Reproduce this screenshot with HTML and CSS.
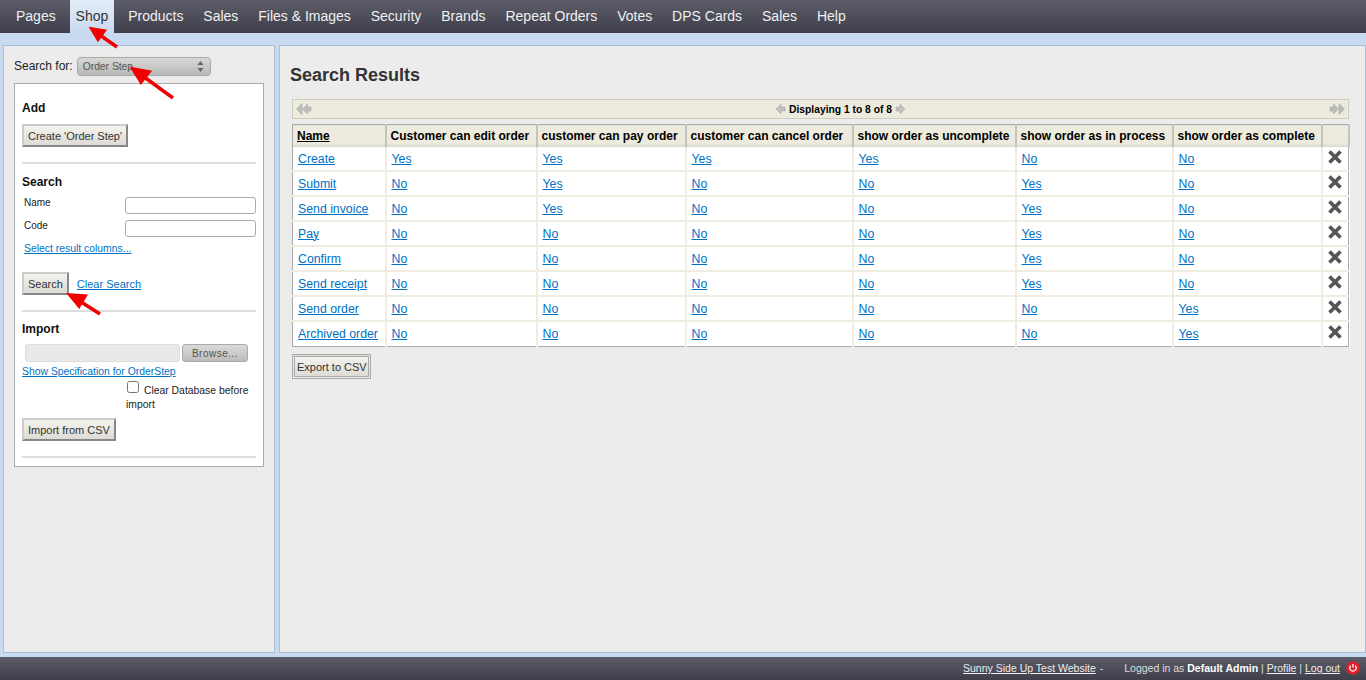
FILE: index.html
```html
<!DOCTYPE html>
<html lang="en">
<head>
  <meta charset="UTF-8">
  <title>Order Steps</title>
  <link rel="stylesheet" href="styles.css">
</head>
<body>

<nav class="topnav">
  <a href="#">Pages</a>
  <a href="#" class="current">Shop</a>
  <a href="#">Products</a>
  <a href="#">Sales</a>
  <a href="#">Files &amp; Images</a>
  <a href="#">Security</a>
  <a href="#">Brands</a>
  <a href="#">Repeat Orders</a>
  <a href="#">Votes</a>
  <a href="#">DPS Cards</a>
  <a href="#">Sales</a>
  <a href="#">Help</a>
</nav>

<div class="main">
  <aside class="side">
    <div class="search-for">
      <label>Search for:</label>
      <div class="fake-select">
        <span>Order Step</span>
        <svg width="7" height="13" viewBox="0 0 7 13"><path d="M3.5 1 6.5 5H.5zM3.5 12 .5 8h6z" fill="#666"/></svg>
      </div>
    </div>
    <div class="side-box">
      <h4>Add</h4>
      <button class="btn">Create 'Order Step'</button>
      <hr>
      <h4 class="search-title">Search</h4>
      <div class="field"><label>Name</label><input type="text"></div>
      <div class="field"><label>Code</label><input type="text"></div>
      <a href="#" class="small-link columns-link">Select result columns...</a>
      <div class="search-actions">
        <button class="btn">Search</button>
        <a href="#" class="clear-link">Clear Search</a>
      </div>
      <hr>
      <h4>Import</h4>
      <div class="file-row">
        <div class="file-name"></div>
        <div class="browse">Browse...</div>
      </div>
      <a href="#" class="small-link spec-link">Show Specification for OrderStep</a>
      <div class="clear-db">
        <input type="checkbox">
        <span>Clear Database before import</span>
      </div>
      <button class="btn">Import from CSV</button>
      <hr>
    </div>
  </aside>

  <section class="content">
    <h2>Search Results</h2>

    <div class="pager">
      <svg class="arrow" width="16" height="12" viewBox="0 0 16 12"><path d="M6 .5.5 6 6 11.5zM11.5 1 6.5 6l5 5V8H15V4h-3.500z" fill="#bcbcbc" stroke="#a0a0a0" stroke-width=".5"/></svg>
      <div class="pager-mid">
        <svg class="arrow" width="11" height="12" viewBox="0 0 11 12"><path d="M6 1 1 6l5 5V8h4V4H6z" fill="#c0c0c0" stroke="#a0a0a0" stroke-width=".5"/></svg>
        <b>Displaying 1 to 8 of 8</b>
        <svg class="arrow" width="11" height="12" viewBox="0 0 11 12"><path d="M5 1l5 5-5 5V8H1V4h4z" fill="#c0c0c0" stroke="#a0a0a0" stroke-width=".5"/></svg>
      </div>
      <svg class="arrow" width="16" height="12" viewBox="0 0 16 12"><path d="M10 .5 15.500 6 10 11.500zM4.500 1l5 5-5 5V8H1V4h3.500z" fill="#bcbcbc" stroke="#a0a0a0" stroke-width=".5"/></svg>
    </div>

    <table class="results">
      <colgroup>
        <col class="c1"><col class="c2"><col class="c3"><col class="c4"><col class="c5"><col class="c6"><col class="c7"><col class="c8">
      </colgroup>
      <thead>
        <tr>
          <th><a href="#">Name</a></th>
          <th>Customer can edit order</th>
          <th>customer can pay order</th>
          <th>customer can cancel order</th>
          <th>show order as uncomplete</th>
          <th>show order as in process</th>
          <th>show order as complete</th>
          <th></th>
        </tr>
      </thead>
      <tbody id="rows"></tbody>
    </table>

    <button class="btn export">Export to CSV</button>
  </section>
</div>

<footer class="bottom">
  <a href="#" class="site-link">Sunny Side Up Test Website</a>
  <span class="dash">-</span>
  <span class="login">Logged in as <b>Default Admin</b> | <a href="#">Profile</a> | <a href="#">Log out</a></span>
  <svg class="power" width="14" height="14" viewBox="0 0 14 14"><circle cx="7" cy="7" r="6.8" fill="#e0202a"/><path d="M4.800 4.600a3.200 3.200 0 1 0 4.400 0" fill="none" stroke="#fff" stroke-width="1.300"/><path d="M7 3v3.600" stroke="#fff" stroke-width="1.300"/></svg>
</footer>

<!-- red annotation arrows from the screenshot -->
<svg class="annotations" width="1366" height="680" viewBox="0 0 1366 680">
  <g stroke="#f00000" stroke-width="3.500" fill="#f00000">
    <path d="M117 47 97 33"/><path d="M92 29 104 31 98 39z"/>
    <path d="M173 98 140 74"/><path d="M133 69 149 72 141 82z"/>
    <path d="M100 314 78 300"/><path d="M70 295 85 296 79 306z"/>
  </g>
</svg>

<script>
  const rows = [
    ["Create", "Yes", "Yes", "Yes", "Yes", "No", "No"],
    ["Submit", "No", "Yes", "No", "No", "Yes", "No"],
    ["Send invoice", "No", "Yes", "No", "No", "Yes", "No"],
    ["Pay", "No", "No", "No", "No", "Yes", "No"],
    ["Confirm", "No", "No", "No", "No", "Yes", "No"],
    ["Send receipt", "No", "No", "No", "No", "Yes", "No"],
    ["Send order", "No", "No", "No", "No", "No", "Yes"],
    ["Archived order", "No", "No", "No", "No", "No", "Yes"]
  ];
  const deleteIcon = '<svg width="16" height="16" viewBox="0 0 16 16"><path d="M2.500 2.500l11 11M13.500 2.500l-11 11" stroke="#555" stroke-width="3.600"/></svg>';

  document.getElementById('rows').innerHTML = rows.map(row => `
    <tr>
      ${row.map(text => `<td><a href="#">${text}</a></td>`).join('')}
      <td class="del">${deleteIcon}</td>
    </tr>
  `).join('');
</script>

</body>
</html>
```

FILE: styles.css
```css
html, body {
  height: 100%;
}
body {
  margin: 0;
  height: 680px;
  overflow: hidden;
  display: flex;
  flex-direction: column;
  background-color: #c8daf0;
  font-family: "Liberation Sans", Arial, sans-serif;
  font-size: 12px;
  color: #222;
}
a {
  color: #0071c4;
}

/* top menu */
.topnav {
  height: 33px;
  flex: none;
  display: flex;
  gap: 7.9px;
  padding-left: 10px;
  background: linear-gradient(#5c5d68, #3e3f4a);
}
.topnav a {
  padding: 8px 6px 0;
  color: #f0f0f0;
  font-size: 14px;
  text-decoration: none;
}
.topnav a.current {
  background: linear-gradient(#e4edf8, #c8daf0);
  color: #333;
}

.main {
  flex: 1;
  min-height: 0;
  display: flex;
  gap: 4px;
  padding: 12px 2px 4px 3px;
}

/* left column */
.side {
  width: 272px;
  flex: none;
  box-sizing: border-box;
  padding: 11px 10px 0 10px;
  background-color: #ececec;
  border: 1px solid #a9bdd6;
}
.search-for {
  display: flex;
  align-items: center;
  gap: 4px;
  font-size: 12px;
  color: #222;
}
.search-for label {
  padding-bottom: 1px;
}
.fake-select {
  width: 134px;
  height: 19px;
  box-sizing: border-box;
  display: flex;
  align-items: center;
  justify-content: space-between;
  padding: 0 6px 0 5px;
  border: 1px solid #aaa;
  border-radius: 4px;
  background: linear-gradient(#d8d8d6, #b8b8b6);
  color: #555;
  font-size: 10.3px;
}
.side-box {
  margin-top: 7px;
  height: 384px;
  box-sizing: border-box;
  padding: 17px 7px 0;
  background-color: #fff;
  border: 1px solid #aaa;
}
.side-box h4 {
  margin: 0;
  font-size: 12px;
  line-height: 15px;
  color: #111;
}
.side-box h4.search-title {
  margin-top: 11px;
}
.side-box hr {
  height: 2px;
  margin: 15px 0 10px;
  border: 0;
  background-color: #ddd;
}
.btn {
  display: block;
  padding: 0 4px;
  height: 23px;
  background: linear-gradient(#f4f3ee, #dcdbd6);
  border: 2px solid #aaa;
  border-color: #ccc #888 #888 #ccc;
  font-family: "Liberation Sans", Arial, sans-serif;
  font-size: 11px;
  color: #333;
  border-radius: 0;
}
.side-box h4 + .btn {
  margin-top: 8px;
}
.field {
  display: flex;
  justify-content: space-between;
  align-items: flex-start;
  height: 23px;
  padding-left: 2px;
  font-size: 10px;
  line-height: 10px;
}
.field label {
  padding-top: 1px;
}
.side-box h4 + .field {
  margin-top: 7px;
}
.field input {
  width: 131px;
  height: 17px;
  box-sizing: border-box;
  border: 1px solid #aaa;
  border-radius: 3px;
  background-color: #fff;
}
.small-link {
  font-size: 10.5px;
}
.columns-link {
  display: block;
  padding-left: 2px;
  font-size: 10.4px;
}
.spec-link {
  font-size: 10.4px;
}
.clear-link {
  font-size: 11px;
}
.search-actions {
  display: flex;
  align-items: center;
  gap: 8px;
  margin-top: 18px;
}
.file-row {
  display: flex;
  gap: 2px;
  margin: 7px 0 2px 3px;
}
.file-name {
  width: 155px;
  height: 18px;
  background-color: #e9e9e7;
  border: 1px solid #ddd;
  border-radius: 3px;
  box-sizing: border-box;
}
.browse {
  width: 66px;
  height: 18px;
  box-sizing: border-box;
  text-align: center;
  line-height: 17px;
  font-size: 10px;
  color: #555;
  letter-spacing: .5px;
  background: linear-gradient(#dadad8, #bcbcba);
  border: 1px solid #aaa;
  border-radius: 3px;
}
.clear-db {
  margin: 6px 0 6px 104px;
  font-size: 10.4px;
  line-height: 14px;
  color: #222;
}
.clear-db input {
  width: 12px;
  height: 12px;
  margin: -3px 2px 0 1px;
  vertical-align: top;
}

/* results */
.content {
  flex: 1;
  box-sizing: border-box;
  padding: 0 15px 0 10px;
  background-color: #ececec;
  border: 1px solid #a9bdd6;
}
.content h2 {
  margin: 18px 0 13px;
  font-size: 18px;
  line-height: 22px;
  color: #333;
}
.pager {
  width: 1057px;
  height: 20px;
  margin-left: 2px;
  display: flex;
  align-items: center;
  justify-content: space-between;
  box-sizing: border-box;
  padding: 0 3px;
  background-color: #ecebdd;
  border: 1px solid #cfcdbd;
  font-size: 10.3px;
  color: #000;
}
.pager-mid {
  display: flex;
  align-items: center;
  gap: 3px;
  margin-left: 40px;
}
.results {
  width: 1056px;
  margin: 5px 0 0 2px;
  table-layout: fixed;
  border-collapse: collapse;
  border: 1px solid #aaa;
  background-color: #fff;
}
.c1 { width: 93px; }
.c2 { width: 151px; }
.c3 { width: 149px; }
.c4 { width: 167px; }
.c5 { width: 163px; }
.c6 { width: 157px; }
.c7 { width: 149px; }
.c8 { width: 27px; }
.results th {
  height: 22px;
  padding: 0 4px;
  text-align: left;
  font-size: 12px;
  color: #000;
  white-space: nowrap;
  background: linear-gradient(#ecebdd 80%, #d8d6c8);
  border: 1px solid #c4c4bc;
  border-width: 0 2px 0 0;
}
.results th a {
  color: #000;
}
.results td {
  height: 23px;
  padding: 0 4px 0 5px;
  font-size: 12.3px;
  border-right: 2px solid #f0ede0;
  border-bottom: 2px solid #f0ede0;
}
.results tr:last-child td {
  height: 24px;
  border-bottom: 0;
}
.results td.del {
  border-right: 0;
  padding: 0 0 0 4px;
}
.del svg {
  display: block;
  margin-top: -4px;
}
.export {
  margin: 7px 0 0 2px;
  height: 25px;
  padding: 0 1px 0 2px;
  border: 3px double #aaa;
}

/* bottom bar */
.bottom {
  height: 23px;
  flex: none;
  box-sizing: border-box;
  display: flex;
  align-items: center;
  justify-content: flex-end;
  padding: 0 6px 1px 0;
  background: linear-gradient(#5c5d68, #3e3f4a);
  color: #ddd;
  font-size: 10.5px;
}
.bottom a {
  color: #eee;
}
.bottom b {
  color: #fff;
}
.dash {
  margin-left: 4px;
}
.login {
  margin-left: 21px;
}
.power {
  margin-left: 6px;
}

.annotations {
  position: absolute;
  left: 0;
  top: 0;
  pointer-events: none;
}
```
